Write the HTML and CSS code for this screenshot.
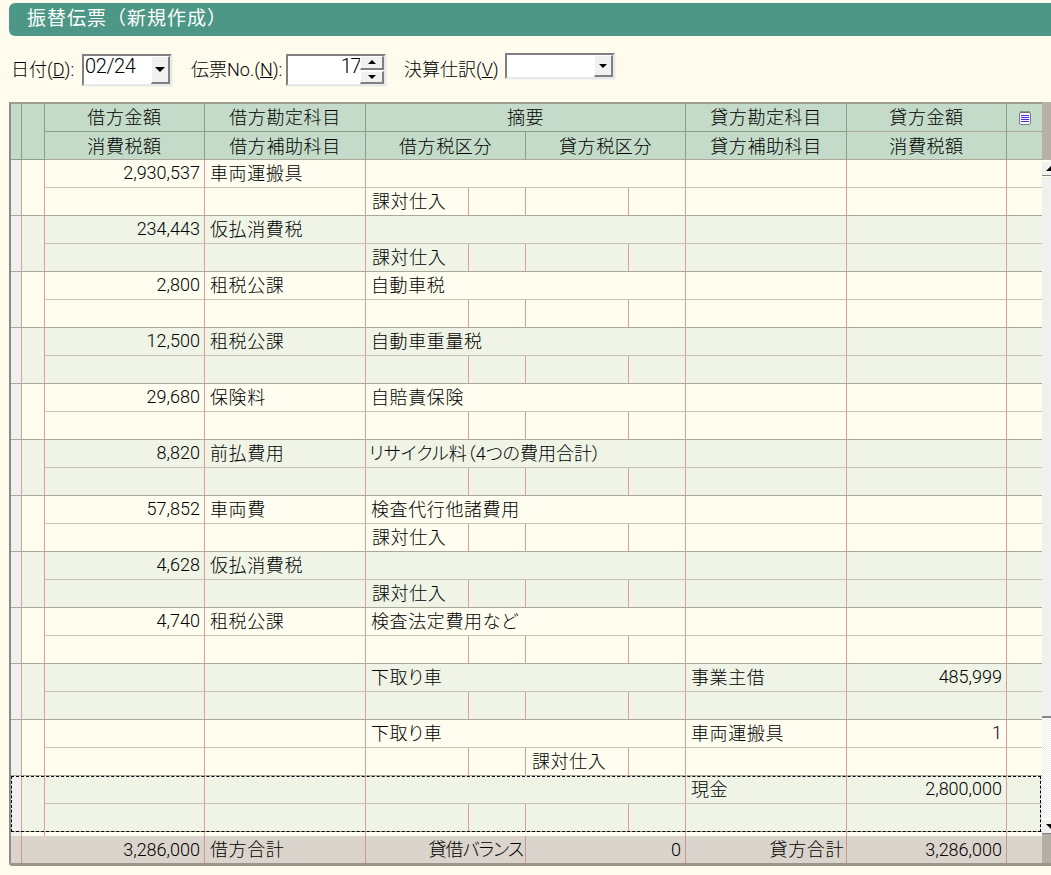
FILE: index.html
```html
<!DOCTYPE html>
<html lang="ja">
<head>
<meta charset="utf-8">
<title>振替伝票（新規作成）</title>
<link rel="stylesheet" href="styles.css">
</head>
<body>
<h1 class="title">振替伝票（新規作成）</h1>
<div class="toolbar">
  <label class="lbl lbl-date">日付(<u>D</u>):</label>
  <div class="field field-date"><span class="val">02/24</span><span class="drop"><i class="tri-down"></i></span></div>
  <label class="lbl lbl-no">伝票No.(<u>N</u>):</label>
  <div class="field field-no"><span class="val val-r">17</span><span class="spin"><span class="spin-b"><i class="tri-up"></i></span><span class="spin-b"><i class="tri-down small"></i></span></span></div>
  <label class="lbl lbl-kes">決算仕訳(<u>V</u>)</label>
  <div class="field field-kes"><span class="val"></span><span class="drop"><i class="tri-down small"></i></span></div>
</div>
<div class="sheet">
  <div class="main">
    <div class="rec head">
      <div class="gut"></div><div class="mark"></div>
      <div class="c">借方金額</div><div class="c">借方勘定科目</div><div class="c s4">摘要</div><div class="c">貸方勘定科目</div><div class="c">貸方金額</div>
      <div class="c e"><svg class="memo" width="12" height="14" viewBox="0 0 12 14"><rect x="0.5" y="1.5" width="11" height="12" rx="1.5" fill="#f6f6ff" stroke="#7c7c7c"/><path d="M2 1.5V0M4 1.5V0M6 1.5V0M8 1.5V0M10 1.5V0" stroke="#555"/><path d="M2 4.5H10M2 6.5H10M2 8.5H10M2 10.5H10" stroke="#4a2cf0"/></svg></div>
      <div class="c">消費税額</div><div class="c">借方補助科目</div><div class="c s2">借方税区分</div><div class="c s2">貸方税区分</div><div class="c">貸方補助科目</div><div class="c">消費税額</div><div class="c e"></div>
    </div>

    <div class="rec">
      <div class="gut"></div><div class="mark"></div>
      <div class="c n">2,930,537</div><div class="c t">車両運搬具</div><div class="c s4 t"></div><div class="c t"></div><div class="c n"></div><div class="c e"></div>
      <div class="c"></div><div class="c"></div><div class="c t tax">課対仕入</div><div class="c"></div><div class="c"></div><div class="c"></div><div class="c"></div><div class="c"></div><div class="c e"></div>
    </div>
    <div class="rec alt">
      <div class="gut"></div><div class="mark"></div>
      <div class="c n">234,443</div><div class="c t">仮払消費税</div><div class="c s4 t"></div><div class="c t"></div><div class="c n"></div><div class="c e"></div>
      <div class="c"></div><div class="c"></div><div class="c t tax">課対仕入</div><div class="c"></div><div class="c"></div><div class="c"></div><div class="c"></div><div class="c"></div><div class="c e"></div>
    </div>
    <div class="rec">
      <div class="gut"></div><div class="mark"></div>
      <div class="c n">2,800</div><div class="c t">租税公課</div><div class="c s4 t">自動車税</div><div class="c t"></div><div class="c n"></div><div class="c e"></div>
      <div class="c"></div><div class="c"></div><div class="c"></div><div class="c"></div><div class="c"></div><div class="c"></div><div class="c"></div><div class="c"></div><div class="c e"></div>
    </div>
    <div class="rec alt">
      <div class="gut"></div><div class="mark"></div>
      <div class="c n">12,500</div><div class="c t">租税公課</div><div class="c s4 t">自動車重量税</div><div class="c t"></div><div class="c n"></div><div class="c e"></div>
      <div class="c"></div><div class="c"></div><div class="c"></div><div class="c"></div><div class="c"></div><div class="c"></div><div class="c"></div><div class="c"></div><div class="c e"></div>
    </div>
    <div class="rec">
      <div class="gut"></div><div class="mark"></div>
      <div class="c n">29,680</div><div class="c t">保険料</div><div class="c s4 t">自賠責保険</div><div class="c t"></div><div class="c n"></div><div class="c e"></div>
      <div class="c"></div><div class="c"></div><div class="c"></div><div class="c"></div><div class="c"></div><div class="c"></div><div class="c"></div><div class="c"></div><div class="c e"></div>
    </div>
    <div class="rec alt">
      <div class="gut"></div><div class="mark"></div>
      <div class="c n">8,820</div><div class="c t">前払費用</div><div class="c s4 t tight">リサイクル料（4つの費用合計）</div><div class="c t"></div><div class="c n"></div><div class="c e"></div>
      <div class="c"></div><div class="c"></div><div class="c"></div><div class="c"></div><div class="c"></div><div class="c"></div><div class="c"></div><div class="c"></div><div class="c e"></div>
    </div>
    <div class="rec">
      <div class="gut"></div><div class="mark"></div>
      <div class="c n">57,852</div><div class="c t">車両費</div><div class="c s4 t">検査代行他諸費用</div><div class="c t"></div><div class="c n"></div><div class="c e"></div>
      <div class="c"></div><div class="c"></div><div class="c t tax">課対仕入</div><div class="c"></div><div class="c"></div><div class="c"></div><div class="c"></div><div class="c"></div><div class="c e"></div>
    </div>
    <div class="rec alt">
      <div class="gut"></div><div class="mark"></div>
      <div class="c n">4,628</div><div class="c t">仮払消費税</div><div class="c s4 t"></div><div class="c t"></div><div class="c n"></div><div class="c e"></div>
      <div class="c"></div><div class="c"></div><div class="c t tax">課対仕入</div><div class="c"></div><div class="c"></div><div class="c"></div><div class="c"></div><div class="c"></div><div class="c e"></div>
    </div>
    <div class="rec">
      <div class="gut"></div><div class="mark"></div>
      <div class="c n">4,740</div><div class="c t">租税公課</div><div class="c s4 t">検査法定費用など</div><div class="c t"></div><div class="c n"></div><div class="c e"></div>
      <div class="c"></div><div class="c"></div><div class="c"></div><div class="c"></div><div class="c"></div><div class="c"></div><div class="c"></div><div class="c"></div><div class="c e"></div>
    </div>
    <div class="rec alt">
      <div class="gut"></div><div class="mark"></div>
      <div class="c n"></div><div class="c t"></div><div class="c s4 t">下取り車</div><div class="c t">事業主借</div><div class="c n">485,999</div><div class="c e"></div>
      <div class="c"></div><div class="c"></div><div class="c"></div><div class="c"></div><div class="c"></div><div class="c"></div><div class="c"></div><div class="c"></div><div class="c e"></div>
    </div>
    <div class="rec">
      <div class="gut"></div><div class="mark"></div>
      <div class="c n"></div><div class="c t"></div><div class="c s4 t">下取り車</div><div class="c t">車両運搬具</div><div class="c n">1</div><div class="c e"></div>
      <div class="c"></div><div class="c"></div><div class="c"></div><div class="c"></div><div class="c t tax">課対仕入</div><div class="c"></div><div class="c"></div><div class="c"></div><div class="c e"></div>
    </div>
    <div class="rec alt focus">
      <div class="gut"></div><div class="mark"></div>
      <div class="c n"></div><div class="c t"></div><div class="c s4 t"></div><div class="c t">現金</div><div class="c n">2,800,000</div><div class="c e"></div>
      <div class="c"></div><div class="c"></div><div class="c"></div><div class="c"></div><div class="c"></div><div class="c"></div><div class="c"></div><div class="c"></div><div class="c e"></div>
    </div>

    <div class="gap">
      <div class="gut"></div><div class="mark"></div>
      <div class="c"></div><div class="c"></div><div class="c s4"></div><div class="c"></div><div class="c"></div><div class="c e"></div>
    </div>

    <div class="foot">
      <div class="gut"></div>
      <div class="c n sx">3,286,000</div><div class="c t">借方合計</div><div class="c s2 r bal">貸借バランス</div><div class="c s2 n">0</div><div class="c r">貸方合計</div><div class="c n">3,286,000</div><div class="c e"></div>
    </div>
  </div>
  <div class="scroll">
    <div class="sc-top"></div>
    <div class="sc-btn"><i class="sc-up"></i></div>
    <div class="sc-thumb"></div>
    <div class="sc-track"></div>
    <div class="sc-btn"><i class="sc-dn"></i></div>
    <div class="sc-bot"></div>
  </div>
</div>
</body>
</html>
```

FILE: styles.css
```css
* { box-sizing: border-box; }
html, body { margin: 0; padding: 0; height: 875px; overflow: hidden; }
body {
  background: #fffcee;
  color: #000;
  font-family: Roboto, "Noto Sans CJK JP", sans-serif;
  font-weight: 300;
  font-size: 18px;
  font-feature-settings: "palt";
}
.title {
  margin: 3px 0 0 9px;
  height: 33px;
  padding-left: 18px;
  background: #4c9785;
  border-radius: 6px 0 0 6px;
  color: #fff;
  font-size: 19px;
  font-weight: 400;
  font-feature-settings: normal;
  letter-spacing: 1px;
  line-height: 32px;
  white-space: nowrap;
}
.toolbar {
  display: flex;
  align-items: flex-start;
  height: 66px;
  padding: 17px 0 0 11px;
}
.lbl { line-height: 34px; white-space: nowrap; }
.lbl-date { width: 71px; }
.lbl-no { width: 95px; margin-left: 19px; }
.lbl-kes { width: 101px; margin-left: 18px; }
.field {
  display: flex;
  background: #fff;
  border: 2px solid;
  border-color: #808080 #e8e8e8 #e8e8e8 #808080;
  box-shadow: 1px 1px 0 #f4f4ee;
}
.field-date { width: 90px; height: 32px; margin-top: 1px; }
.field-no { width: 100px; height: 32px; margin-top: 1px; }
.field-kes { width: 110px; height: 26px; }
.val {
  flex: 1;
  padding: 0 0 0 1px;
  font-size: 20px;
  line-height: 20px;
  letter-spacing: -0.4px;
}
.val-r { text-align: right; padding-right: 0; letter-spacing: -1.5px; }
.drop {
  width: 19px;
  height: 100%;
  display: flex;
  align-items: center;
  justify-content: center;
  background: #f0f0f0;
  border: solid;
  border-width: 1px 2px 2px 1px;
  border-color: #fff #808080 #808080 #fff;
}
.spin { width: 24px; display: flex; flex-direction: column; gap: 1px; }
.spin-b {
  flex: 1;
  display: flex;
  align-items: center;
  justify-content: center;
  background: #f0f0f0;
  border: solid;
  border-width: 1px 2px 2px 1px;
  border-color: #fff #808080 #808080 #fff;
}
.tri-down, .tri-up { display: block; width: 0; height: 0; border-left: 5px solid transparent; border-right: 5px solid transparent; }
.tri-down { border-top: 5px solid #000; }
.tri-up { border-left-width: 4px; border-right-width: 4px; border-bottom: 4px solid #000; }
.tri-down.small { border-left-width: 4px; border-right-width: 4px; border-top-width: 4px; }

.sheet {
  display: flex;
  margin-left: 9px;
  width: 1042px;
  border-top: 2px solid #a09c90;
  border-left: 2px solid #8f8c84;
  border-bottom: 3px solid #9a968c;
  border-bottom-left-radius: 3px;
}
.main { width: 1031px; flex: none; }
.rec, .gap, .foot {
  display: grid;
  grid-template-columns: 11px 23px 160px 161px 103px 57px 103px 57px 161px 160px 35px;
}
.rec { grid-auto-rows: 28px; background: #fffdf0; position: relative; }
.rec.alt { background: #eff4e6; }
.c {
  border-right: 1px solid #dd9f94;
  border-bottom: 1px solid #c9c3b2;
  line-height: 26px;
  white-space: nowrap;
  overflow: hidden;
}
.rec > .c:nth-last-child(-n+9) { border-bottom-color: #a9a99a; }
.gut, .mark { grid-row: span 2; border-right: 1px solid #dd9f94; border-bottom: 1px solid #a9a99a; }
.gut { background: #f0f0f0; }
.s4 { grid-column: span 4; }
.s2 { grid-column: span 2; }
.e { border-right: 0; }
.n { text-align: right; padding-right: 4px; letter-spacing: 0; }
.t { padding-left: 5px; letter-spacing: 0.6px; line-height: 28px; }
.tight { padding-left: 3px; letter-spacing: 0; }
.tax { padding-left: 6px; }
.r { text-align: right; padding-right: 2px; letter-spacing: 0.6px; }
.bal { letter-spacing: -1px; }

.head { background: #c3dbc8; }
.head .c { text-align: center; border-color: #8c9c8e; letter-spacing: 0.6px; line-height: 28px; }
.head .c:nth-last-child(-n+7) { line-height: 30px; }
.head .gut, .head .mark { background: #c3dbc8; border-color: #8c9c8e; }
.memo { display: block; margin: 7px 0 0 12px; }

.focus::after {
  content: "";
  position: absolute;
  inset: 0 1px 0 0;
  border: 1px dashed #000;
  pointer-events: none;
}
.gap { height: 4px; background: #fffdf0; }
.gap .c, .gap .gut, .gap .mark { border-bottom: 0; grid-row: auto; }
.gap .gut { border-right: 1px solid #dd9f94; }
.foot { height: 27px; background: #dbd4cc; grid-auto-rows: 27px; }
.foot .gut { grid-row: auto; background: transparent; border-bottom: 0; border-right-color: #c99a90; }
.foot .c { border-bottom: 0; border-right-color: #c99a90; line-height: 27px; }
.sx { grid-column: span 2; }

.scroll { width: 9px; flex: none; display: flex; flex-direction: column; }
.sc-top { height: 58px; background: #b5b0a8; margin-top: -2px; flex: none; }
.sc-btn { height: 15px; margin-top: 1px; background: #f0f0f0; border-top: 1px solid #fff; border-bottom: 1px solid #808080; position: relative; flex: none; overflow: hidden; }
.sc-up, .sc-dn { position: absolute; left: 4px; top: 4px; width: 0; height: 0; border-left: 5px solid transparent; border-right: 5px solid transparent; }
.sc-up { border-bottom: 5px solid #000; }
.sc-dn { border-top: 5px solid #000; }
.sc-thumb { height: 541px; margin-top: 1px; background: #f0f0f0; border-bottom: 2px solid #888; flex: none; }
.sc-track {
  height: 100px;
  flex: none;
  background-image: conic-gradient(#fff 25%, #eee 0 50%, #fff 0 75%, #eee 0);
  background-size: 2px 2px;
}
.sc-bot { flex: 1; background: #b3aea6; }
```
